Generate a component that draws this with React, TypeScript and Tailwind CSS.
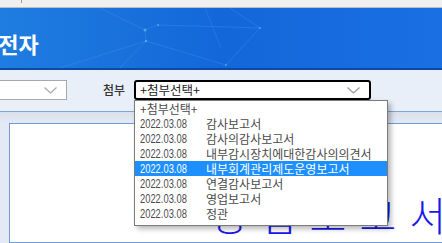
import React from "react";

const items = [
  { d: "", t: "+첨부선택+" },
  { d: "2022.03.08", t: "감사보고서" },
  { d: "2022.03.08", t: "감사의감사보고서" },
  { d: "2022.03.08", t: "내부감시장치에대한감사의의견서" },
  { d: "2022.03.08", t: "내부회계관리제도운영보고서", sel: true },
  { d: "2022.03.08", t: "연결감사보고서" },
  { d: "2022.03.08", t: "영업보고서" },
  { d: "2022.03.08", t: "정관" },
];

function Chevron({ color = "#9a9a9a" }: { color?: string }) {
  return (
    <svg width="13" height="7" viewBox="0 0 13 7" fill="none">
      <path d="M0.5 0.5 L6.5 6 L12.5 0.5" stroke={color} strokeWidth="1.2" />
    </svg>
  );
}

export default function App() {
  const kr = { fontFamily: '"Noto Sans CJK KR", "Noto Sans", sans-serif' };
  return (
    <div
      className="relative w-[442px] h-[243px] overflow-hidden bg-[#e3e9f4] flex flex-col"
      style={kr}
    >
      {/* top bar */}
      <div className="h-[8px] shrink-0 bg-[#f0f0f0] border-b border-[#bdbdbd] relative">
        <div className="absolute left-[21px] top-0 w-[1px] h-[3px] bg-[#c8925a]" />
      </div>

      {/* header */}
      <div className="relative h-[62px] shrink-0 bg-gradient-to-r from-[#1f7de0] via-[#1467d9] to-[#1a6fe2] border-b-2 border-[#0c4aa8] overflow-hidden">
        <svg className="absolute inset-0" width="442" height="60" viewBox="0 0 442 60">
          <g stroke="#7fc0ff" strokeOpacity="0.22" strokeWidth="0.8">
            <line x1="100" y1="0" x2="145" y2="22" />
            <line x1="145" y1="22" x2="158" y2="17" />
            <line x1="145" y1="22" x2="146" y2="33" />
            <line x1="146" y1="33" x2="120" y2="60" />
            <line x1="158" y1="17" x2="260" y2="20" />
            <line x1="146" y1="33" x2="226" y2="57" />
            <line x1="260" y1="20" x2="226" y2="57" />
            <line x1="260" y1="20" x2="230" y2="0" />
            <line x1="205" y1="0" x2="221" y2="40" />
            <line x1="60" y1="60" x2="146" y2="33" />
          </g>
          <g fill="#9fd0ff" fillOpacity="0.45">
            <circle cx="145" cy="22" r="1.5" />
            <circle cx="146" cy="33" r="1.2" />
            <circle cx="158" cy="17" r="1" />
            <circle cx="260" cy="20" r="1" />
            <circle cx="226" cy="57" r="1" />
          </g>
        </svg>
        <div className="relative pt-[24px] -ml-[22px] text-white font-bold text-[22px] leading-[22px]">
          시전자
        </div>
      </div>

      {/* filter band */}
      <div className="h-[42px] shrink-0 bg-[#e9eff9] border-b border-[#86a2d0] flex items-start pt-[10px]">
        <div className="-ml-[9px] w-[76px] h-[20px] bg-white border border-[#a9a9a9] flex items-center justify-end pr-[9px]">
          <Chevron color="#a8a8a8" />
        </div>
        <div className="ml-[36px] w-[31px] h-[20px] flex items-center text-[12px] text-[#333] font-medium">
          첨부
        </div>
        <div className="w-[237px] h-[20px] bg-white border-2 border-black rounded-[3px] flex items-center justify-between pl-[4px] pr-[9px]">
          <span className="text-[12.5px] text-[#222] leading-none">+첨부선택+</span>
          <Chevron />
        </div>
      </div>

      {/* lower area */}
      <div className="flex-1 flex pl-[9px] pt-[11px] bg-gradient-to-b from-[#d9e1ee] to-[#e4eaf5] to-[12px]">
        <div className="flex-1 bg-white border border-[#6f9bd4] border-r-0 pt-[70px] pl-[200px] overflow-hidden">
          <div className="text-[40px] leading-[40px] tracking-[13px] text-[#1818ee] whitespace-nowrap font-light">
            영업보고서
          </div>
        </div>
      </div>

      {/* dropdown list */}
      <div className="absolute left-[134px] top-[100px] w-[254px] bg-white border border-[#7a7a7a] pb-[4px] shadow-[3px_3px_5px_rgba(0,0,0,0.28)]">
        {items.map((it, i) => (
          <div
            key={i}
            className={
              "h-[15px] flex items-center pl-[5px] whitespace-nowrap " +
              (it.sel ? "bg-[#1e8fff] text-white" : "text-[#4a4a4a]")
            }
          >
            {it.d ? (
              <>
                <div className="w-[66px] h-[15px] flex items-center">
                  <span
                    className="block origin-left scale-x-[0.72] text-[13px] leading-[15px] whitespace-nowrap"
                    style={{ fontFamily: '"Liberation Sans", Arial, sans-serif' }}
                  >
                    {it.d}
                  </span>
                </div>
                <span className="block text-[12px] leading-[15px]">{it.t}</span>
              </>
            ) : (
              <span className="block text-[12px] leading-[15px]">{it.t}</span>
            )}
          </div>
        ))}
      </div>
    </div>
  );
}
